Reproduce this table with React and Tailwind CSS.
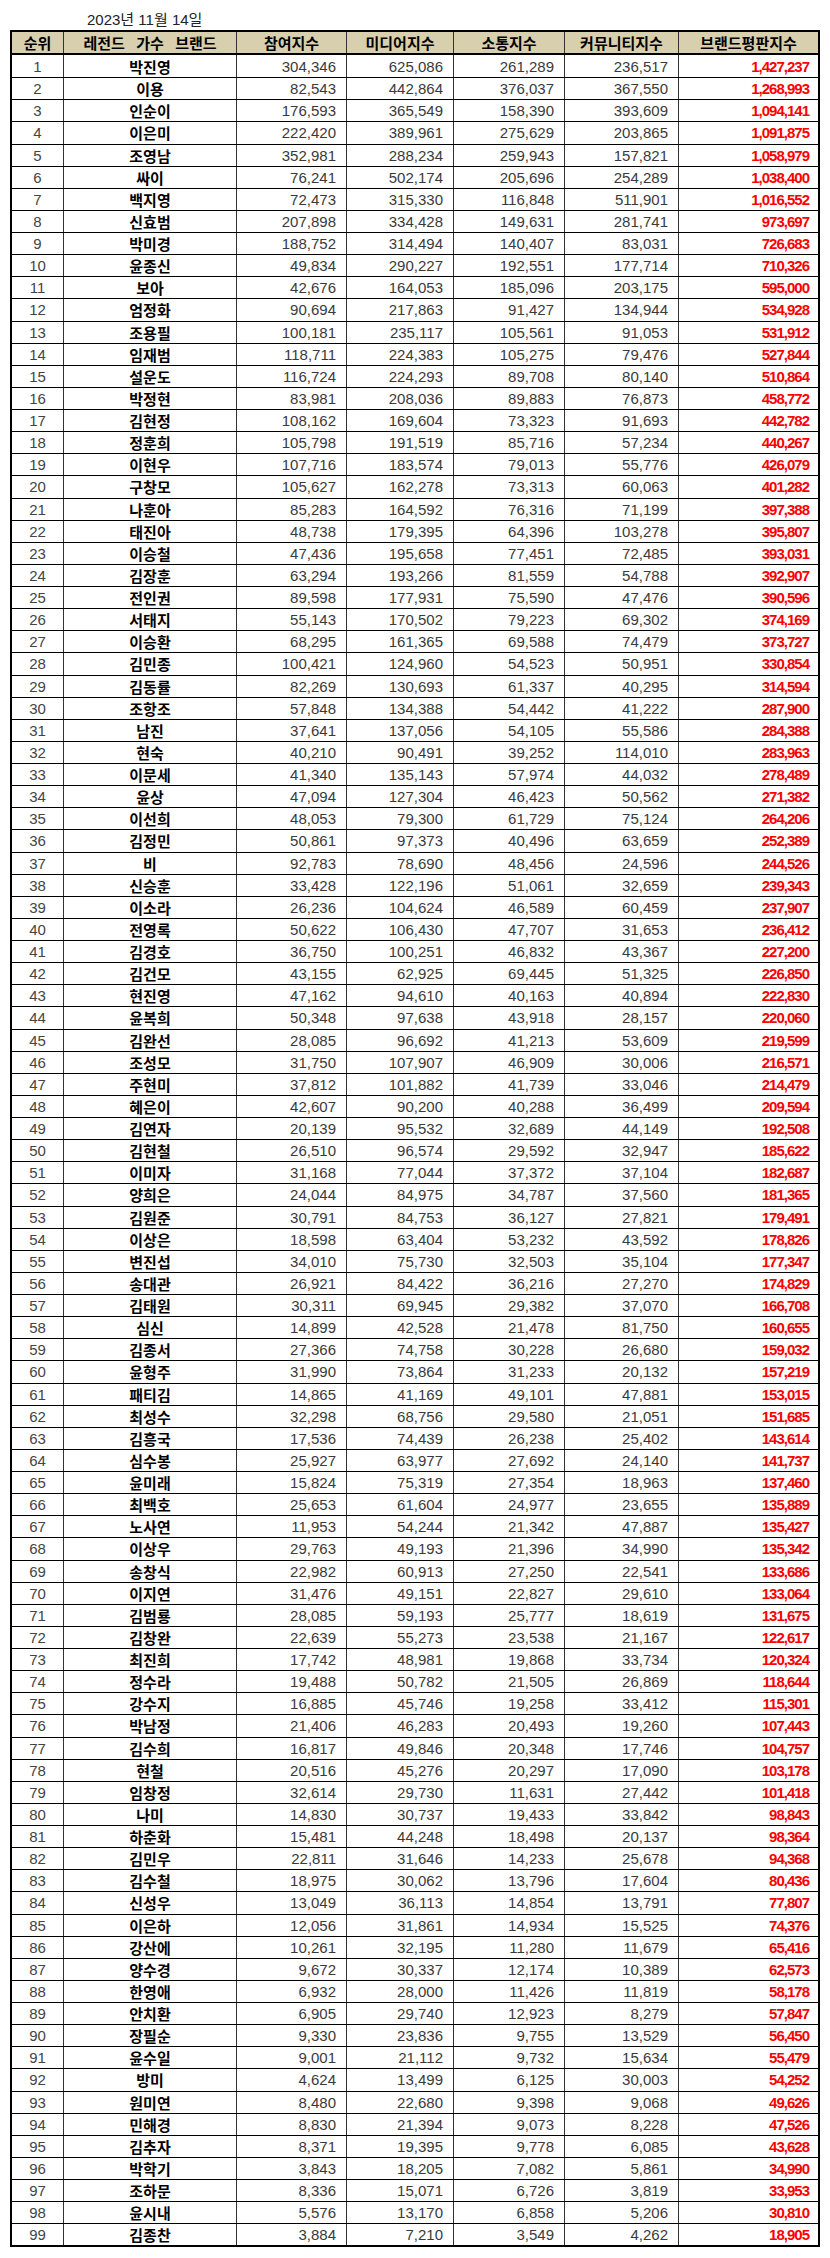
import React from 'react';

const raw = `박진영 304,346 625,086 261,289 236,517 1,427,237
이용 82,543 442,864 376,037 367,550 1,268,993
인순이 176,593 365,549 158,390 393,609 1,094,141
이은미 222,420 389,961 275,629 203,865 1,091,875
조영남 352,981 288,234 259,943 157,821 1,058,979
싸이 76,241 502,174 205,696 254,289 1,038,400
백지영 72,473 315,330 116,848 511,901 1,016,552
신효범 207,898 334,428 149,631 281,741 973,697
박미경 188,752 314,494 140,407 83,031 726,683
윤종신 49,834 290,227 192,551 177,714 710,326
보아 42,676 164,053 185,096 203,175 595,000
엄정화 90,694 217,863 91,427 134,944 534,928
조용필 100,181 235,117 105,561 91,053 531,912
임재범 118,711 224,383 105,275 79,476 527,844
설운도 116,724 224,293 89,708 80,140 510,864
박정현 83,981 208,036 89,883 76,873 458,772
김현정 108,162 169,604 73,323 91,693 442,782
정훈희 105,798 191,519 85,716 57,234 440,267
이현우 107,716 183,574 79,013 55,776 426,079
구창모 105,627 162,278 73,313 60,063 401,282
나훈아 85,283 164,592 76,316 71,199 397,388
태진아 48,738 179,395 64,396 103,278 395,807
이승철 47,436 195,658 77,451 72,485 393,031
김장훈 63,294 193,266 81,559 54,788 392,907
전인권 89,598 177,931 75,590 47,476 390,596
서태지 55,143 170,502 79,223 69,302 374,169
이승환 68,295 161,365 69,588 74,479 373,727
김민종 100,421 124,960 54,523 50,951 330,854
김동률 82,269 130,693 61,337 40,295 314,594
조항조 57,848 134,388 54,442 41,222 287,900
남진 37,641 137,056 54,105 55,586 284,388
현숙 40,210 90,491 39,252 114,010 283,963
이문세 41,340 135,143 57,974 44,032 278,489
윤상 47,094 127,304 46,423 50,562 271,382
이선희 48,053 79,300 61,729 75,124 264,206
김정민 50,861 97,373 40,496 63,659 252,389
비 92,783 78,690 48,456 24,596 244,526
신승훈 33,428 122,196 51,061 32,659 239,343
이소라 26,236 104,624 46,589 60,459 237,907
전영록 50,622 106,430 47,707 31,653 236,412
김경호 36,750 100,251 46,832 43,367 227,200
김건모 43,155 62,925 69,445 51,325 226,850
현진영 47,162 94,610 40,163 40,894 222,830
윤복희 50,348 97,638 43,918 28,157 220,060
김완선 28,085 96,692 41,213 53,609 219,599
조성모 31,750 107,907 46,909 30,006 216,571
주현미 37,812 101,882 41,739 33,046 214,479
혜은이 42,607 90,200 40,288 36,499 209,594
김연자 20,139 95,532 32,689 44,149 192,508
김현철 26,510 96,574 29,592 32,947 185,622
이미자 31,168 77,044 37,372 37,104 182,687
양희은 24,044 84,975 34,787 37,560 181,365
김원준 30,791 84,753 36,127 27,821 179,491
이상은 18,598 63,404 53,232 43,592 178,826
변진섭 34,010 75,730 32,503 35,104 177,347
송대관 26,921 84,422 36,216 27,270 174,829
김태원 30,311 69,945 29,382 37,070 166,708
심신 14,899 42,528 21,478 81,750 160,655
김종서 27,366 74,758 30,228 26,680 159,032
윤형주 31,990 73,864 31,233 20,132 157,219
패티김 14,865 41,169 49,101 47,881 153,015
최성수 32,298 68,756 29,580 21,051 151,685
김흥국 17,536 74,439 26,238 25,402 143,614
심수봉 25,927 63,977 27,692 24,140 141,737
윤미래 15,824 75,319 27,354 18,963 137,460
최백호 25,653 61,604 24,977 23,655 135,889
노사연 11,953 54,244 21,342 47,887 135,427
이상우 29,763 49,193 21,396 34,990 135,342
송창식 22,982 60,913 27,250 22,541 133,686
이지연 31,476 49,151 22,827 29,610 133,064
김범룡 28,085 59,193 25,777 18,619 131,675
김창완 22,639 55,273 23,538 21,167 122,617
최진희 17,742 48,981 19,868 33,734 120,324
정수라 19,488 50,782 21,505 26,869 118,644
강수지 16,885 45,746 19,258 33,412 115,301
박남정 21,406 46,283 20,493 19,260 107,443
김수희 16,817 49,846 20,348 17,746 104,757
현철 20,516 45,276 20,297 17,090 103,178
임창정 32,614 29,730 11,631 27,442 101,418
나미 14,830 30,737 19,433 33,842 98,843
하춘화 15,481 44,248 18,498 20,137 98,364
김민우 22,811 31,646 14,233 25,678 94,368
김수철 18,975 30,062 13,796 17,604 80,436
신성우 13,049 36,113 14,854 13,791 77,807
이은하 12,056 31,861 14,934 15,525 74,376
강산에 10,261 32,195 11,280 11,679 65,416
양수경 9,672 30,337 12,174 10,389 62,573
한영애 6,932 28,000 11,426 11,819 58,178
안치환 6,905 29,740 12,923 8,279 57,847
장필순 9,330 23,836 9,755 13,529 56,450
윤수일 9,001 21,112 9,732 15,634 55,479
방미 4,624 13,499 6,125 30,003 54,252
원미연 8,480 22,680 9,398 9,068 49,626
민해경 8,830 21,394 9,073 8,228 47,526
김추자 8,371 19,395 9,778 6,085 43,628
박학기 3,843 18,205 7,082 5,861 34,990
조하문 8,336 15,071 6,726 3,819 33,953
윤시내 5,576 13,170 6,858 5,206 30,810
김종찬 3,884 7,210 3,549 4,262 18,905`;

const rows = raw.split('\n').map((line) => line.trim().split(' '));

const headers = ['참여지수', '미디어지수', '소통지수', '커뮤니티지수', '브랜드평판지수'];

const gridCols = 'grid grid-cols-[52px_173px_110px_107px_111px_114px_139px]';
const numFont = "font-['Liberation_Sans','Noto_Sans_CJK_KR',sans-serif]";
const krFont = "font-['Noto_Sans_CJK_KR',sans-serif]";

const App = () => {
  return (
    <div className="w-[830px] min-h-[2258px] bg-white">
      <div className={`h-[30px] pl-[87px] pt-[9px] text-[15px] leading-[22px] text-[#222] ${numFont}`}>
        2023년 11월 14일
      </div>

      <div className="ml-[10px] w-[810px] border-2 border-black">
        {/* header */}
        <div className={`${gridCols} h-[23px] border-b-2 border-black bg-[#d8cfaf] ${krFont} font-bold text-[15px] text-black`}>
          <div className="flex items-center justify-center border-r border-[#333] leading-none">순위</div>
          <div className="flex items-center justify-center border-r border-[#333] leading-none [word-spacing:8px]">
            레전드 가수 브랜드
          </div>
          {headers.map((h, i) => (
            <div
              key={h}
              className={`flex items-center justify-center leading-none ${i < 4 ? 'border-r border-[#333]' : ''}`}
            >
              {h}
            </div>
          ))}
        </div>

        {/* body */}
        {rows.map((r, i) => (
          <div
            key={i}
            className={`${gridCols} h-[22.13px] ${i > 0 ? 'border-t border-black' : ''}`}
          >
            <div className={`flex items-center justify-center border-r border-[#333] text-[15px] leading-none text-[#444] ${numFont}`}>
              {i + 1}
            </div>
            <div className={`flex items-center justify-center border-r border-[#333] text-[15px] leading-none font-bold text-black ${krFont}`}>
              {r[0]}
            </div>
            {r.slice(1, 5).map((v, j) => (
              <div
                key={j}
                className={`flex items-center justify-end pr-[10px] border-r border-[#333] text-[15px] leading-none text-[#3a3a3a] ${numFont}`}
              >
                {v}
              </div>
            ))}
            <div className={`flex items-center justify-end pr-[9px] text-[15px] leading-none font-bold tracking-[-1px] text-[#ff0000] ${numFont}`}>
              {r[5]}
            </div>
          </div>
        ))}
      </div>
    </div>
  );
};

export default App;
